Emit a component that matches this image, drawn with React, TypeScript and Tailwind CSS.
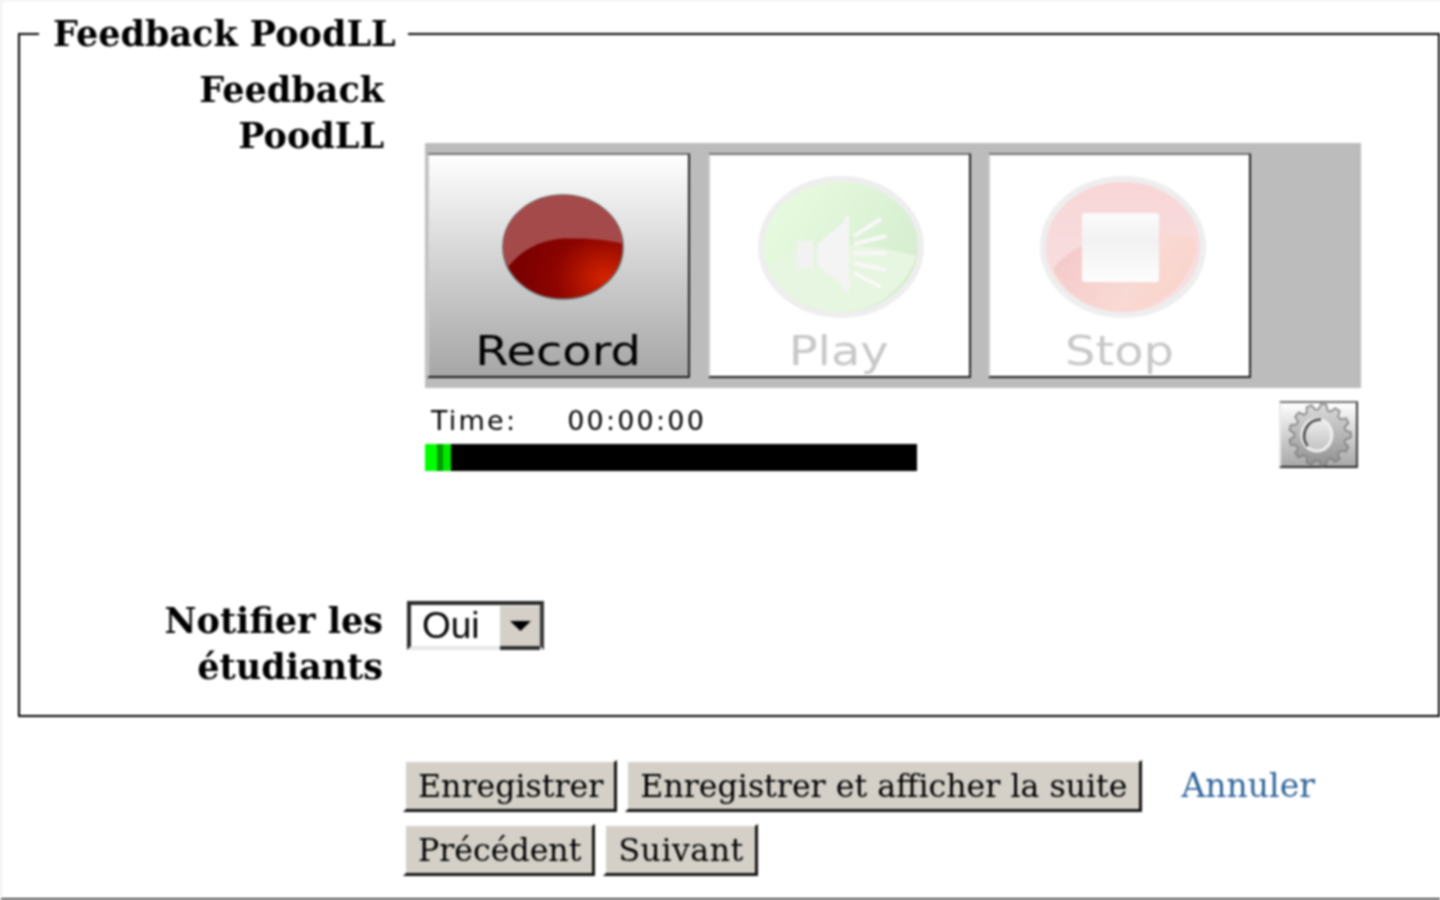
import React from 'react';

const gearPath = () => {
  const pts: string[] = [];
  const teeth = 13;
  for (let i = 0; i < teeth; i++) {
    const a = (i / teeth) * Math.PI * 2;
    const step = (Math.PI * 2) / teeth;
    [[25, -0.3], [30, -0.15], [30, 0.15], [25, 0.3]].forEach(([r, o]) => {
      const t = a + o * step * 1.2;
      pts.push(`${(32 + r * Math.cos(t)).toFixed(1)} ${(32 + r * Math.sin(t)).toFixed(1)}`);
    });
  }
  return `M${pts.join('L')}Z`;
};

const RecordIcon = () => (
  <svg className="ml-[8px] shrink-0" width="124" height="106" viewBox="0 0 124 106">
    <defs>
      <radialGradient id="recGlow" cx="0.85" cy="0.8" r="0.7">
        <stop offset="0" stopColor="#d42400" />
        <stop offset="0.6" stopColor="#8c0400" />
        <stop offset="1" stopColor="#7c0000" />
      </radialGradient>
    </defs>
    <ellipse cx="62" cy="53" rx="60" ry="52" fill="url(#recGlow)" stroke="#666" strokeWidth="1.5" />
    <path d="M2 53 C2 24 29 1 62 1 C95 1 121 24 122 50 C105 45 85 44 62 44.6 C40 46 20 56 7 73 C4 67 2 60 2 53Z" fill="#a54a4a" />
  </svg>
);

const PlayIcon = () => (
  <svg className="ml-[4px] shrink-0" width="166" height="142" viewBox="0 0 166 142">
    <defs>
      <linearGradient id="playFill" x1="0" y1="0" x2="1" y2="0.6">
        <stop offset="0" stopColor="#eafde2" />
        <stop offset="1" stopColor="#d6edcf" />
      </linearGradient>
    </defs>
    <ellipse cx="83" cy="71" rx="80" ry="68" fill="url(#playFill)" stroke="#eeeeee" strokeWidth="6" />
    <path d="M9 92 C35 66 95 62 158 80 C148 112 118 136 83 136 C50 136 22 118 9 92Z" fill="#e7f6e1" />
    <path d="M39 63 L43 65 H52 L55 63 V95 L52 92 H43 L39 95Z" fill="#f2f2f2" />
    <path d="M60 67 L86 46 L87 40 H91 V116 H87 L86 110 L60 90Z" fill="#f4f4f4" />
    <g stroke="#f8f8f8" strokeWidth="4" fill="none">
      <path d="M96 60 L123 43" />
      <path d="M96 68 L128 60" />
      <path d="M96 77 L128 77" />
      <path d="M96 87 L128 94" />
      <path d="M96 97 L123 111" />
    </g>
  </svg>
);

const StopIcon = () => (
  <svg className="ml-[6px] shrink-0" width="166" height="142" viewBox="0 0 166 142">
    <defs>
      <linearGradient id="stopTop" x1="0" y1="0" x2="0" y2="1">
        <stop offset="0" stopColor="#f9d6d8" />
        <stop offset="1" stopColor="#f8e1e2" />
      </linearGradient>
      <linearGradient id="stopBottom" x1="0" y1="0" x2="1" y2="0.4">
        <stop offset="0" stopColor="#f3c6c8" />
        <stop offset="0.7" stopColor="#f9d9d4" />
        <stop offset="1" stopColor="#f9d5cb" />
      </linearGradient>
      <linearGradient id="stopSquare" x1="0" y1="0" x2="0" y2="1">
        <stop offset="0" stopColor="#fbfbfb" />
        <stop offset="0.4" stopColor="#f2f2f2" />
        <stop offset="1" stopColor="#fdfdfd" />
      </linearGradient>
    </defs>
    <ellipse cx="83" cy="71" rx="80" ry="68" fill="url(#stopTop)" stroke="#eeeeee" strokeWidth="6" />
    <path d="M13 93 C35 62 95 48 156 62 C158 100 122 136 83 136 C50 136 25 118 13 93Z" fill="url(#stopBottom)" />
    <rect x="42" y="37" width="77" height="69" rx="3" fill="url(#stopSquare)" />
  </svg>
);

const GearIcon = () => (
  <svg className="ml-[3px] shrink-0" width="66" height="66" viewBox="0 0 64 64">
    <defs>
      <linearGradient id="gearFill" x1="0" y1="0" x2="0" y2="1">
        <stop offset="0" stopColor="#dcdcdc" />
        <stop offset="1" stopColor="#909090" />
      </linearGradient>
      <linearGradient id="gearHole" x1="0" y1="0" x2="0" y2="1">
        <stop offset="0" stopColor="#ececec" />
        <stop offset="1" stopColor="#c4c4c4" />
      </linearGradient>
    </defs>
    <path d={gearPath()} fill="url(#gearFill)" stroke="#808080" strokeWidth="1.5" />
    <ellipse cx="29" cy="32" rx="16" ry="17" fill="#f0f0f0" />
    <ellipse cx="29" cy="32" rx="13" ry="14" fill="url(#gearHole)" />
    <path d="M20 43 C12 32 19 17 33 17" fill="none" stroke="#4a4a4a" strokeWidth="2.5" />
  </svg>
);

const ControlButton = ({
  label,
  active,
  children,
}: {
  label: string;
  active?: boolean;
  children: React.ReactNode;
}) => (
  <div
    className={`flex h-[225px] w-[263px] flex-col items-center overflow-hidden rounded-[1px] border-2 border-t-[#707070] border-r-[#222222] border-b-[#1c1c1c] border-l-[#c9c9c9] ${
      active ? 'bg-gradient-to-b from-white to-[#a6a6a6]' : 'bg-white'
    }`}
  >
    <div className={`flex items-center justify-center ${active ? 'h-[176px] pt-[8px]' : 'h-[176px] pt-[7px]'}`}>{children}</div>
    <span
      className={`scale-x-[1.2] font-['DejaVu_Sans',sans-serif] text-[40px] leading-[40px] ${
        active ? 'text-black' : 'text-[#c8c8c8]'
      }`}
    >
      {label}
    </span>
  </div>
);

const FormButton = ({ children, className = '' }: { children: React.ReactNode; className?: string }) => (
  <button
    className={`h-[52px] border-t-2 border-r-[3px] border-b-[3px] border-l-[3px] border-t-white border-r-[#141414] border-b-[#141414] border-l-white bg-[#d4d0c8] pr-[11px] pl-[12px] font-['DejaVu_Serif',serif] text-[31.6px] leading-[44px] text-black ${className}`}
  >
    {children}
  </button>
);

export default function App() {
  return (
    <div className="h-[900px] w-[1440px] overflow-hidden border-t border-b-2 border-l-2 border-t-[#e4e4e4] border-b-[#444444] border-l-[#eeeeee] bg-white pt-[10px] pl-[16px] font-['DejaVu_Serif',serif] blur-[0.8px]">
      <fieldset className="border-2 border-black pb-[25px]">
        <legend className="ml-[19px] pr-[12px] pl-[14px] text-[35px] leading-[46px] font-bold text-black">
          Feedback PoodLL
        </legend>

        <div className="mt-[10px] flex">
          <div className="w-[364px] text-right text-[35px] leading-[46px] font-bold text-black">
            Feedback
            <br />
            PoodLL
          </div>
          <div className="ml-[41px] w-[936px] pt-[76px]">
            <div className="flex h-[245px] gap-[17.5px] bg-[#bcbcbc] pt-[10px] pl-[2px]">
              <ControlButton label="Record" active>
                <RecordIcon />
              </ControlButton>
              <ControlButton label="Play">
                <PlayIcon />
              </ControlButton>
              <ControlButton label="Stop">
                <StopIcon />
              </ControlButton>
            </div>

            <div className="flex justify-between pt-[13px] pr-[3px]">
              <div>
                <div className="flex h-[41px] items-center gap-[50px] pl-[6px] font-['DejaVu_Sans',sans-serif] text-[27px] tracking-[2.2px] text-black">
                  <span>Time:</span>
                  <span>00:00:00</span>
                </div>
                <div className="mt-[2px] flex h-[27px] w-[492px] bg-black">
                  <span className="w-[12px] bg-[#00ff00]" />
                  <span className="w-[6px] bg-[#009a00]" />
                  <span className="w-[8px] bg-[#00e800]" />
                </div>
              </div>
              <div className="flex h-[67px] w-[79px] items-center justify-center border-2 border-t-[#707070] border-r-[#383838] border-b-[#282828] border-l-[#e8e8e8] bg-gradient-to-b from-white to-[#a8a8a8]">
                <GearIcon />
              </div>
            </div>
          </div>
        </div>

        <div className="mt-[127px] flex">
          <div className="w-[363px] text-right text-[35px] leading-[46px] font-bold text-black">
            Notifier les
            <br />
            étudiants
          </div>
          <div className="mt-[3px] ml-[24px] flex h-[49px] w-[137px] border-[4px] border-t-[#282828] border-r-[#383838] border-b-[#e8e8e8] border-l-[#282828] bg-white">
            <span className="flex-1 pl-[11px] font-['Liberation_Sans',sans-serif] text-[37px] leading-[42px] text-black">
              Oui
            </span>
            <span className="mt-[1px] -mb-[4px] flex w-[40px] items-center justify-center border-b-[4px] border-b-[#303030] bg-[#d4d0c8]">
              <svg width="21" height="10" viewBox="0 0 21 10">
                <path d="M0 0H21L10.5 10Z" fill="#000" />
              </svg>
            </span>
          </div>
        </div>
      </fieldset>

      <div className="mt-[43px] ml-[385px]">
        <div className="flex items-center gap-[8px]">
          <FormButton>Enregistrer</FormButton>
          <FormButton>Enregistrer et afficher la suite</FormButton>
          <a className="ml-[32px] text-[33px] text-[#2f6499]">Annuler</a>
        </div>
        <div className="mt-[12px] flex gap-[8px]">
          <FormButton>Précédent</FormButton>
          <FormButton className="tracking-[0.5px]">Suivant</FormButton>
        </div>
      </div>
    </div>
  );
}
